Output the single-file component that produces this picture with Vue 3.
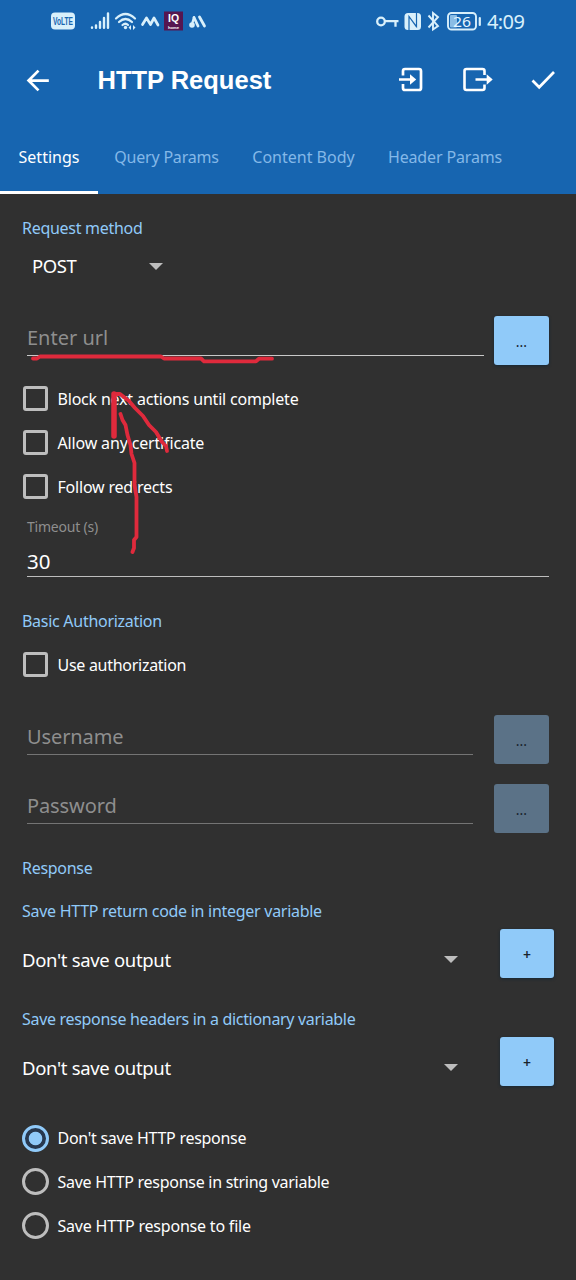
<script setup>
import { ref } from 'vue'

const tabs = [
  { label: 'Settings', cls: 'tab-settings' },
  { label: 'Query Params', cls: 'tab-query' },
  { label: 'Content Body', cls: 'tab-body' },
  { label: 'Header Params', cls: 'tab-header' },
]
const activeTab = ref(0)
const checks = ['Block next actions until complete', 'Allow any certificate', 'Follow redirects']
const outputs = [
  'Save HTTP return code in integer variable',
  'Save response headers in a dictionary variable',
]
const responses = ["Don't save HTTP response", 'Save HTTP response in string variable', 'Save HTTP response to file']
const selected = ref(0)
</script>

<template>
  <div class="screen">
    <header>
      <div class="status">
        <svg class="status-icons" viewBox="0 0 170 42" width="170" height="42">
          <rect x="11" y="12.500" width="24" height="17" rx="4" fill="#d9f0fb" />
          <text x="13" y="25" class="volte" textLength="20" lengthAdjust="spacingAndGlyphs">VoLTE</text>
          <g stroke="#d9f0fb" stroke-width="2.400" stroke-linecap="round" fill="none">
            <path d="M52 27.500v.3M56 25.500v2.300M60 22v5.800M64 18v9.800M68 13.500v14.300" />
            <path d="M76 18.500q9.500-9 19 0M79 22q6.500-6 13 0M82.500 25q3-2.500 5.500 0" stroke-width="2.200" />
            <path d="M102.500 24.500l4-6.500 4 6.500 3.500-6.500 4 7" stroke-width="2.700" stroke-linejoin="round" />
            <path d="M154 17.500l4 8.500M159.500 17l5 9" stroke-width="2.800" />
            <path d="M154 17.500l-1.500 5" stroke-width="2.400" />
          </g>
          <circle cx="85.500" cy="27.500" r="1.700" fill="#d9f0fb" />
          <path d="M91 25l-2.500 2.500 2.500 2.500zM93 25l2.500 2.500-2.500 2.500z" fill="#d9f0fb" />
          <rect x="124" y="11.500" width="19" height="19" fill="#561650" />
          <text x="128" y="22" class="iq" textLength="11" lengthAdjust="spacingAndGlyphs">IQ</text>
          <text x="128" y="28.700" class="iq-sub" textLength="11" lengthAdjust="spacingAndGlyphs">home</text>
          <circle cx="152" cy="25" r="2.800" fill="#d9f0fb" />
        </svg>
        <svg class="status-right" viewBox="0 0 112 42" width="112" height="42">
          <g fill="none" stroke="#d9f0fb" stroke-width="2.300">
            <circle cx="5" cy="21.500" r="3.800" />
            <path d="M9 21.200h13.500M19.500 21.200v5.500" />
            <path d="M52.500 15.500l9.500 10.500-5 3.500V13l5 4-9.500 10.500" stroke-width="1.900" />
            <rect x="72" y="13" width="28" height="16.500" rx="3.500" stroke-width="1.900" />
            <path d="M103.800 18v7" stroke-linecap="round" stroke-width="2.200" />
          </g>
          <rect x="74" y="15" width="7" height="12.500" rx="1" fill="#8abde5" />
          <rect x="28.500" y="13" width="16.500" height="17" rx="3.500" fill="#d9f0fb" />
          <path d="M33 30V16.500l7.500 10.500M40.500 13v13.500L33 16.500" fill="none" stroke="#1765b0" stroke-width="1.200" />
          <text x="77" y="26.500" class="battery" textLength="18" lengthAdjust="spacingAndGlyphs">26</text>
        </svg>
        <span class="clock">4:09</span>
      </div>

      <div class="appbar">
        <svg class="back" viewBox="0 0 24 24" width="33" height="33">
          <path d="M19.500 12H5M12 4.800L4.800 12l7.200 7.200" fill="none" stroke="#fff" stroke-width="2" />
        </svg>
        <h1>HTTP Request</h1>
        <div class="actions">
          <svg viewBox="0 0 32 32" width="32" height="32">
            <path d="M8 11.500V7q0-2 2-2h14q2 0 2 2v17q0 2-2 2H10q-2 0-2-2v-4M4 15.500h12" fill="none" stroke="#fff" stroke-width="2.700" />
            <path d="M15 10.300l6.200 5.200-6.200 5.200z" fill="#fff" />
          </svg>
          <svg viewBox="0 0 32 32" width="32" height="32">
            <path d="M23.500 11V7q0-2-2-2H5.500q-2 0-2 2v17q0 2 2 2h16q2 0 2-2v-3.500M14.500 15.500h13" fill="none" stroke="#fff" stroke-width="2.600" />
            <path d="M25.700 10.300l6 5.200-6 5.200z" fill="#fff" />
          </svg>
          <svg viewBox="0 0 32 32" width="32" height="32">
            <path d="M5.500 16.500l6.700 6.800L27 8" fill="none" stroke="#fff" stroke-width="2.700" />
          </svg>
        </div>
      </div>

      <nav>
        <button v-for="(t, i) in tabs" :key="t.label" :class="['tab', t.cls, { active: i === activeTab }]" @click="activeTab = i">
          <span>{{ t.label }}</span>
        </button>
      </nav>
    </header>

    <main>
      <div class="heading first">Request method</div>
      <div class="method"><span>POST</span><i class="caret"></i></div>

      <div class="entry url">
        <div class="field bright"><span>Enter url</span></div>
        <button class="btn">...</button>
      </div>

      <div class="group">
        <div v-for="(c, i) in checks" :key="c" :class="['option', 'check-' + i]"><i class="box"></i><span>{{ c }}</span></div>
      </div>

      <div class="timeout-label">Timeout (s)</div>
      <div class="timeout">30</div>

      <div class="heading auth">Basic Authorization</div>
      <div class="option use-auth"><i class="box"></i><span>Use authorization</span></div>

      <div class="entry user">
        <div class="field"><span>Username</span></div>
        <button class="btn off">...</button>
      </div>
      <div class="entry pass">
        <div class="field"><span>Password</span></div>
        <button class="btn off">...</button>
      </div>

      <div class="heading response">Response</div>
      <section v-for="(o, i) in outputs" :key="o" class="output">
        <div :class="['heading', 'out-' + i]">{{ o }}</div>
        <div class="spinner">
          <span>Don't save output</span><i class="caret"></i>
          <button class="btn plus">+</button>
        </div>
      </section>

      <div class="group radios">
        <div v-for="(r, i) in responses" :key="r" :class="['option', 'radio-' + i]" @click="selected = i">
          <i :class="['dot', { on: selected === i }]"></i><span>{{ r }}</span>
        </div>
      </div>
    </main>

    <!-- freehand markup over the form -->
    <svg class="ink" viewBox="0 0 576 1280" width="576" height="1280">
      <g fill="none" stroke="#df2a3c" stroke-width="3.800" stroke-linecap="round" stroke-linejoin="round">
        <path d="M33 358.500h4l3-2h121l3 2h37l3 2.800h52l3-2.600h13" />
        <path d="M114 436V394" stroke-width="5.500" />
        <path d="M115 394h5l9 7 6 7 8 8 6 9 7 7 6 10 4 4 1 5" />
        <path d="M120.500 414l2 6 3 5 2 10 3 10 1 9 3 9v22l2 12v40l-2.500 3v8l-1.500 4" />
      </g>
    </svg>
  </div>
</template>

<style>
body { background: #303030; }
</style>

<style scoped>
.screen {
  position: relative;
  width: 576px;
  height: 1280px;
  overflow: hidden;
  background: #303030;
  color: #fff;
  font-family: "Noto Sans", sans-serif;
  font-size: 16px;
}
.screen * { box-sizing: border-box; }
button { border: 0; padding: 0; font: inherit; color: inherit; background: none; }
span, .heading, h1 { white-space: nowrap; }
header { height: 194px; background: #1765b0; }
.status { display: flex; height: 42px; padding-left: 40px; }
.status-right { margin-left: 166px; }
.clock { margin-left: -1px; font-size: 20px; line-height: 43px; color: #d9f0fb; letter-spacing: -0.6px; }
.volte { font: bold 10px "Liberation Sans", sans-serif; fill: #1765b0; }
.iq { font: bold 11px "Liberation Sans", sans-serif; fill: #fff; }
.iq-sub { font: bold 4px "Liberation Sans", sans-serif; fill: #fff; }
.battery { font: 14.500px "Noto Sans", sans-serif; fill: #e6f6ff; }
.appbar { display: flex; align-items: center; height: 76px; padding: 0 17px 0 22px; }
.back { flex: none; }
h1 { margin: 0 0 0 42.500px; font: bold 25.500px "Liberation Sans", sans-serif; }
.actions { display: flex; gap: 34px; margin-left: auto; }
nav { display: flex; height: 76px; }
.tab { height: 76px; padding: 4px 0 0; border-bottom: 3px solid transparent; color: #84b8e8; }
.tab.active { color: #fff; border-color: #fff; }
.tab-settings { width: 98px; }
.tab-query { width: 137px; letter-spacing: -0.2px; }
.tab-body { width: 137px; }
.tab-header { width: 146px; letter-spacing: -0.15px; }

.heading { height: 24px; line-height: 24px; padding-left: 22px; color: #90caf9; letter-spacing: -0.28px; }
.first { margin-top: 22px; }
.method { display: flex; align-items: center; width: 163px; height: 52px; padding-left: 32px; font-size: 18.500px; }
.method span { position: relative; top: -1px; letter-spacing: -0.4px; }
.caret { margin-left: auto; border: 7px solid transparent; border-top-color: #bdbdbd; border-bottom: 0; }
.entry { display: flex; justify-content: space-between; height: 49px; padding: 0 27px; }
.url { margin-top: 24px; }
.field { width: 446px; height: 40px; border-bottom: 1.500px solid #747474; color: #8e8e8e; font-size: 20px; line-height: 44px; letter-spacing: -0.1px; }
.bright { width: 457px; border-color: #c8c8c8; letter-spacing: 0; }
.btn { width: 55px; height: 49px; flex: none; border-radius: 3px; background: #90caf9; color: #18232c; font-size: 14px; box-shadow: 0 1px 3px #152735; }
.entry .btn { padding-top: 2px; }
.off { background: #5b7287; box-shadow: none; }
.plus { padding-top: 2px; font-weight: 600; }
.group { margin-top: 12px; }
.option { display: flex; align-items: center; height: 43.800px; padding-left: 23px; letter-spacing: -0.28px; }
.option span { padding-top: 1px; margin-left: -0.5px; }
.check-0 { letter-spacing: -0.2px; }
.check-1 { letter-spacing: -0.16px; }
.check-2 { letter-spacing: -0.2px; }
.radio-2 { letter-spacing: -0.2px; }
.out-1 { letter-spacing: -0.31px; }
.box { width: 25px; height: 25px; margin-right: 10px; border: 3px solid #bdbdbd; border-radius: 3px; }
.timeout-label { height: 34px; padding-left: 27px; line-height: 38px; font-size: 14px; color: #8e8e8e; letter-spacing: -0.22px; }
.timeout { width: 522px; height: 35px; margin-left: 27px; border-bottom: 1.500px solid #bdbdbd; font-size: 20.500px; line-height: 38px; }
.auth { margin-top: 32px; }
.use-auth { margin-top: 9px; }
.user { margin-top: 29px; }
.pass { margin-top: 20px; }
.response { margin-top: 23px; }
.output { margin-top: 19px; }
.output + .output { margin-top: 29px; }
.spinner { display: flex; align-items: center; height: 49px; margin-top: 6px; padding: 0 22px; font-size: 18.500px; }
.spinner span, .spinner .caret { position: relative; top: 6px; }
.spinner span { letter-spacing: -0.32px; }
.spinner .btn { width: 54px; margin-left: 42px; }
.radios { margin-top: 30px; }
.radios .option span { padding-top: 0; }
.dot { width: 27px; height: 27px; margin: 0 9px 0 -1px; border: 3px solid #bdbdbd; border-radius: 50%; }
.dot.on { border-color: #90caf9; background: radial-gradient(circle, #90caf9 6.300px, #27384f 7.200px); }
.ink { position: absolute; inset: 0; pointer-events: none; }
</style>
